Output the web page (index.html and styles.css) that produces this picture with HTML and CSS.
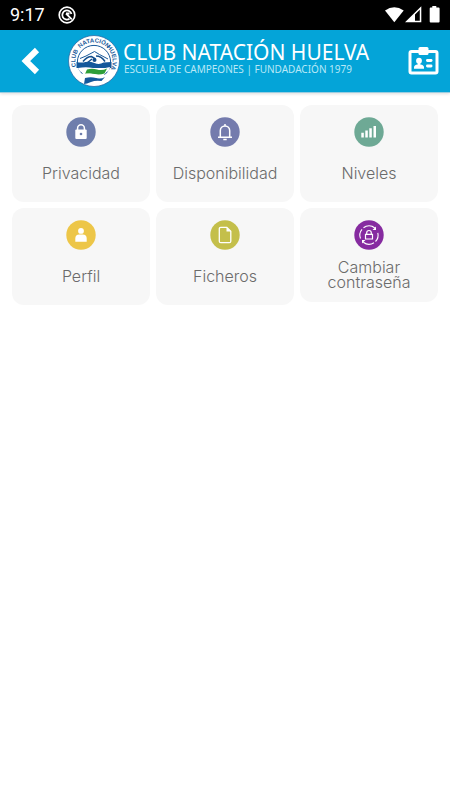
FILE: index.html
```html
<!DOCTYPE html>
<html lang="es">
<head>
<meta charset="utf-8">
<meta name="viewport" content="width=device-width, initial-scale=1">
<title>Club Natación Huelva</title>
<link rel="stylesheet" href="styles.css">
</head>
<body>
<div class="status">
  <span class="time">9:17</span>
  <svg class="status-app" width="18" height="18" viewBox="0 0 18 18" fill="none" stroke="#fff" aria-hidden="true">
    <circle cx="9" cy="9" r="7.8" stroke-width="1.7"/>
    <path d="M11.500 12.800A4.600 4.600 0 1 1 13.400 8" stroke-width="1.800"/>
    <path d="M8 7.500l5.800 5.800M8 7.500h3.500" stroke-width="1.800"/>
  </svg>
  <svg class="status-icons" width="55" height="18" viewBox="0 0 55 18" fill="#fff" aria-hidden="true">
    <path d="M0 4.600Q9.300-2 18.700 4.600L9.300 16.200z"/>
    <path fill-rule="evenodd" d="M20 16.200L36.300 .2v16zM30 8.500v6.200h4.800V3.700z"/>
    <path d="M47.300 0h4v1.600h2.300q1 0 1 1v12.800q0 1-1 1h-7.900q-1 0-1-1V2.600q0-1 1-1h1.600z"/>
  </svg>
</div>
<header class="bar">
  <button class="icon-button back" type="button" aria-label="Volver">
    <svg width="20" height="28" viewBox="0 0 20 28" fill="none" stroke="#fff" stroke-width="6"><path d="M17 3L5.800 14 17 25"/></svg>
  </button>
  <div class="brand">
    <svg class="crest" width="52" height="52" viewBox="0 0 52 52" aria-hidden="true">
      <defs><path id="ring" d="M10.500 36.500A18.700 18.700 0 1 1 41.500 36.500"/></defs>
      <circle cx="26" cy="26" r="25.500" fill="#fff" stroke="#2a6ba5" stroke-width=".8"/>
      <circle cx="26" cy="27" r="16.600" fill="#fff" stroke="#18599a" stroke-width="1"/>
      <text class="crest-text"><textPath href="#ring" startOffset="17%" text-anchor="middle">CLUB</textPath></text>
      <text class="crest-text"><textPath href="#ring" startOffset="50%" text-anchor="middle">NATACIÓN</textPath></text>
      <text class="crest-text"><textPath href="#ring" startOffset="82%" text-anchor="middle">HUELVA</textPath></text>
      <path d="M12 23.500l6-2.500 8.500-4.500 5 3 8.500 4.500" fill="none" stroke="#18599a" stroke-width="1"/>
      <path d="M15 26.500q4-5 8.500-5l4 2.500M28 21q5.500 0 9 5.500M19 28l5-4" fill="none" stroke="#144f8c" stroke-width="1.500"/>
      <circle cx="26.500" cy="25" r="2" fill="#144f8c"/>
      <path d="M8.500 27q5 1 9 0t9 1 9-.5l8-.5v6H8.500z" fill="#14589b"/>
      <path d="M10 33q8-1.500 15 0t17-1l-1.500 4.500H12z" fill="#fff"/>
      <path d="M19 34.500q5-1.500 10 0t10-1l-2.500 5q-5 1.500-10 .5t-9.500 0z" fill="#2e9e38"/>
      <path d="M12 39q9-1 15 .5t13-.5l-3 4q-5 1-10 0t-11 1z" fill="#fff"/>
      <path d="M17 43q6-1.500 11 0t9-1l-3.500 4q-6-1-10.500 1t-7 2z" fill="#14589b"/>
    </svg>
    <div class="wordmark">
      <h1 class="club">CLUB NATACIÓN HUELVA</h1>
      <p class="motto">ESCUELA DE CAMPEONES | FUNDADACIÓN 1979</p>
    </div>
  </div>
  <button class="icon-button badge" type="button" aria-label="Carné">
    <svg width="31" height="28" viewBox="0 0 31 28" fill="#fff">
      <rect x="2" y="4.500" width="27" height="21.500" rx="1.500" fill="none" stroke="#fff" stroke-width="3"/>
      <rect x="10.500" y="0" width="10" height="8" rx="1.500"/>
      <circle cx="11" cy="13.700" r="2.900"/>
      <path d="M9.700 15h2.600v2.500q3.700.3 3.700 3v1.300H6v-1.300q0-2.700 3.700-3z"/>
      <rect x="18" y="12" width="6.500" height="3" rx="1.400"/>
      <rect x="18" y="17.500" width="6.500" height="3" rx="1.400"/>
    </svg>
  </button>
</header>
<main class="grid">
  <button class="card" type="button">
    <svg class="icon" viewBox="0 0 30 30" aria-hidden="true">
      <circle cx="15" cy="15" r="14.700" fill="#6f7eac"/>
      <path d="M11.600 13v-1.800a3.400 3.400 0 0 1 6.800 0V13" fill="none" stroke="#fff" stroke-width="1.500"/>
      <rect x="9.300" y="12.500" width="11.400" height="9.500" rx="1" fill="#fff"/><circle cx="15" cy="17" r="1.300" fill="#6f7eac"/>
    </svg>
    <span class="label">Privacidad</span>
  </button>
  <button class="card" type="button">
    <svg class="icon" viewBox="0 0 30 30" fill="none" stroke="#fff" stroke-width="1.500" aria-hidden="true">
      <circle cx="15" cy="15" r="14.700" fill="#747bad" stroke="none"/>
      <path d="M8 20.300h14M10.300 20v-6.300a4.700 4.700 0 0 1 9.400 0V20M15 7v2M13.300 22.500h3.400"/>
    </svg>
    <span class="label">Disponibilidad</span>
  </button>
  <button class="card" type="button">
    <svg class="icon" viewBox="0 0 30 30" fill="#fff" aria-hidden="true">
      <circle cx="15" cy="15" r="14.700" fill="#6ea995"/>
      <path d="M7.300 15.800h2.500v4.700H7.300zM11.300 13.600h2.500v6.900h-2.500zM15.300 11.300h2.500v9.200h-2.500zM19.500 9h2.500v11.500h-2.500z"/>
    </svg>
    <span class="label">Niveles</span>
  </button>
  <button class="card" type="button">
    <svg class="icon" viewBox="0 0 30 30" fill="#fff" aria-hidden="true">
      <circle cx="15" cy="15" r="14.700" fill="#edc648"/>
      <circle cx="15" cy="10.900" r="2.900"/>
      <path d="M9.300 21.800v-3.300q0-4 4-4h3.400q4 0 4 4v3.300z"/>
    </svg>
    <span class="label">Perfil</span>
  </button>
  <button class="card" type="button">
    <svg class="icon" viewBox="0 0 30 30" aria-hidden="true">
      <circle cx="15" cy="15" r="14.700" fill="#c4bf4b"/>
      <path d="M10.800 7.300h6l4 4v9.900q0 1.500-1.500 1.500h-8.500q-1.500 0-1.500-1.500V8.800q0-1.500 1.500-1.500z" fill="none" stroke="#fff" stroke-width="1.300"/>
      <path d="M16.500 7l4.500 4.500h-4.500z" fill="#fff"/>
    </svg>
    <span class="label">Ficheros</span>
  </button>
  <button class="card" type="button">
    <svg class="icon" viewBox="0 0 30 30" fill="none" stroke="#fff" aria-hidden="true">
      <circle cx="15" cy="15" r="14.700" fill="#862ba0" stroke="none"/>
      <path d="M6.500 18.500A9.200 9.200 0 0 1 8 9.300M9.500 7.700A9.200 9.200 0 0 1 20.800 8M23.800 12.800A9.200 9.200 0 0 1 21.500 21.500M20 22.800A9.200 9.200 0 0 1 9.300 22.200" stroke-width="1.100"/>
      <path d="M22 6.500v3.500h-3.500zM8 23.500V20h3.500z" fill="#fff" stroke="none"/>
      <path d="M12.700 14.300v-1.500a2.300 2.300 0 0 1 4.600 0v1.500M11.500 14.300h7v4.700h-7z" stroke-width="1.200"/>
    </svg>
    <span class="label label-tight">Cambiar contraseña</span>
  </button>
</main>
</body>
</html>
```
FILE: styles.css
```css
* { box-sizing: border-box; }

body {
  margin: 0;
  min-height: 100vh;
  background: #fff;
  font-family: Inter, "Liberation Sans", sans-serif;
}

button {
  border: 0;
  font: inherit;
  cursor: pointer;
}

svg { display: block; flex: none; }

.status {
  display: flex;
  align-items: center;
  height: 30px;
  padding: 0 10px;
  background: #000;
  color: #fff;
}

.time {
  font: 18px/30px Roboto, sans-serif;
}

.status-app { margin-left: 13px; }
.status-icons { margin-left: auto; }

.bar {
  display: flex;
  align-items: center;
  height: 63px;
  padding: 0 11px 0 20px;
  background: #04a4d8;
  border-bottom: 1px solid #9bcde0;
  box-shadow: 0 1px 3px #0002;
  color: #fff;
}

.icon-button {
  padding: 0;
  background: none;
}

.brand {
  display: flex;
  flex: 1;
  margin-left: 28px;
  gap: 3px;
}

.wordmark {
  padding-top: 5px;
  font-family: "Noto Sans", sans-serif;
  white-space: nowrap;
}

.club {
  margin: 0;
  font-size: 21px;
  font-weight: 400;
  line-height: 24px;
}

.motto {
  margin: 0;
  padding-left: 1px;
  font-size: 10px;
  line-height: 10px;
  color: #b9e8f7;
}

.crest-text {
  font: bold 6px "Liberation Sans", sans-serif;
  fill: #18599a;
}

.grid {
  display: grid;
  grid-template-columns: repeat(3, 1fr);
  align-items: start;
  gap: 6px;
  padding: 12px;
}

.card {
  display: flex;
  flex-direction: column;
  align-items: center;
  padding: 12px;
  border-radius: 12px;
  background: #f7f7f7;
  color: #6b6b6b;
}

.icon {
  width: 30px;
  height: 30px;
}

.label {
  padding-top: 10px;
  font-size: 16px;
  font-weight: 300;
  line-height: 33px;
}

.label-tight {
  line-height: 15px;
}
```
